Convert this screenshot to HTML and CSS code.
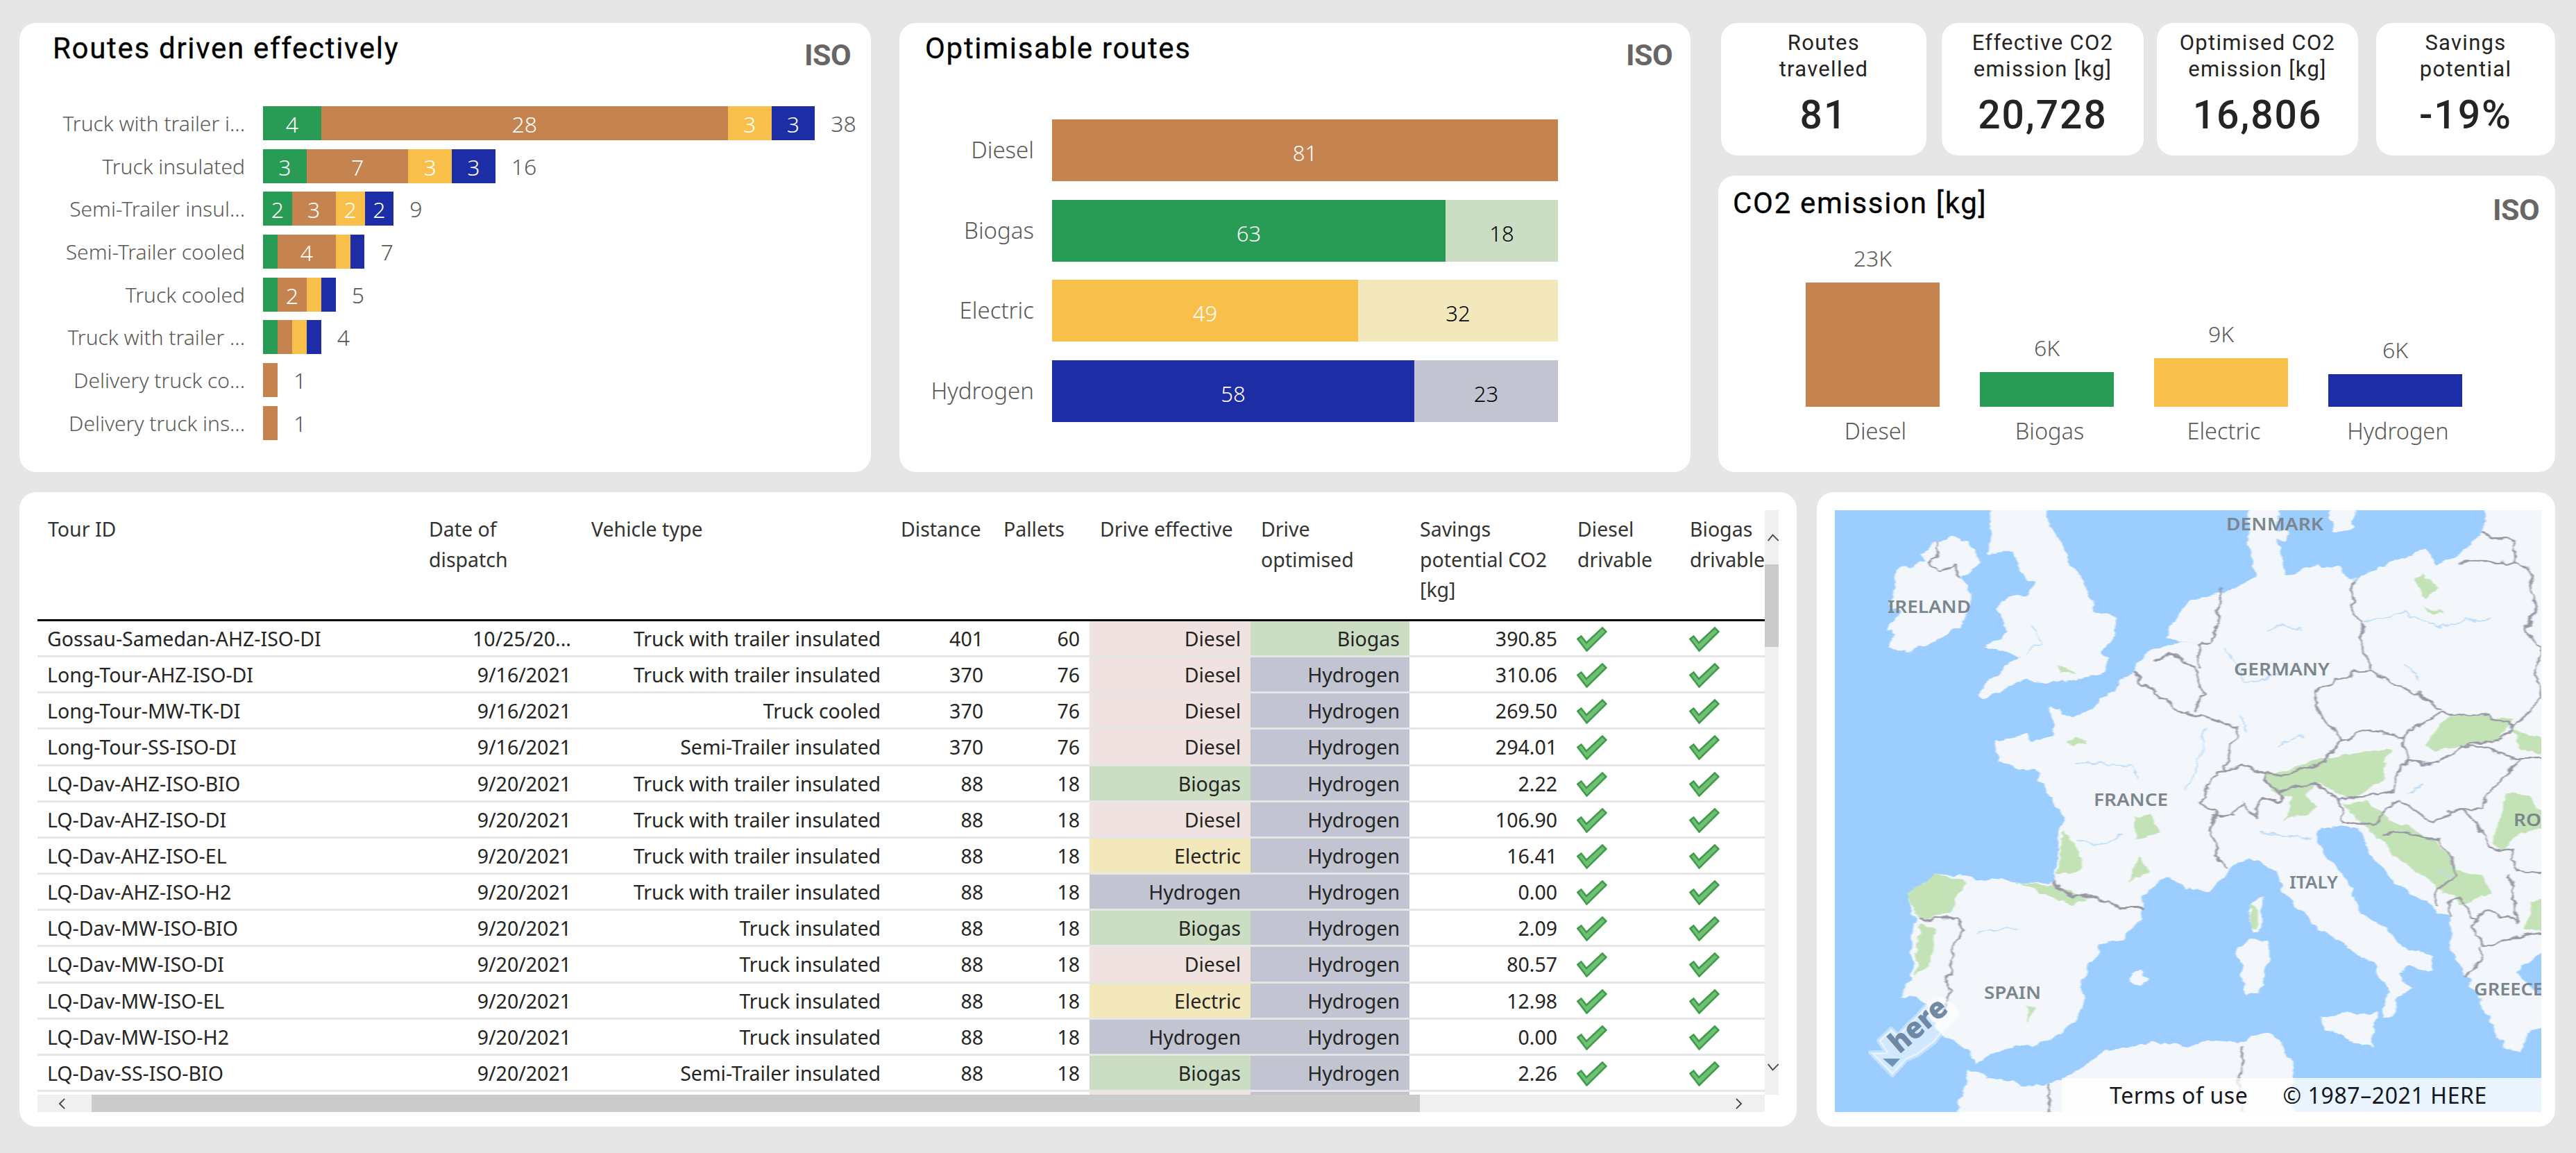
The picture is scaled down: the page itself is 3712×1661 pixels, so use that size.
FILE: index.html
```html
<!DOCTYPE html>
<html lang="en">
<head>
<meta charset="utf-8">
<title>Routes dashboard</title>
<link rel="stylesheet" href="styles.css">
</head>
<body>
<main class="page">
  <section class="top">
    <article class="card card-routes">
      <header class="head head-routes"><h2>Routes driven effectively</h2><span class="iso">ISO</span></header>
      <div class="stack">
        <div class="stack-row"><span class="cat">Truck with trailer i...</span><div class="bar"><i class="seg bio" style="--n:4">4</i><i class="seg die" style="--n:28">28</i><i class="seg ele" style="--n:3">3</i><i class="seg hyd" style="--n:3">3</i><b class="total">38</b></div></div>
        <div class="stack-row"><span class="cat">Truck insulated</span><div class="bar"><i class="seg bio" style="--n:3">3</i><i class="seg die" style="--n:7">7</i><i class="seg ele" style="--n:3">3</i><i class="seg hyd" style="--n:3">3</i><b class="total">16</b></div></div>
        <div class="stack-row"><span class="cat">Semi-Trailer insul...</span><div class="bar"><i class="seg bio" style="--n:2">2</i><i class="seg die" style="--n:3">3</i><i class="seg ele" style="--n:2">2</i><i class="seg hyd" style="--n:2">2</i><b class="total">9</b></div></div>
        <div class="stack-row"><span class="cat">Semi-Trailer cooled</span><div class="bar"><i class="seg bio" style="--n:1"></i><i class="seg die" style="--n:4">4</i><i class="seg ele" style="--n:1"></i><i class="seg hyd" style="--n:1"></i><b class="total">7</b></div></div>
        <div class="stack-row"><span class="cat">Truck cooled</span><div class="bar"><i class="seg bio" style="--n:1"></i><i class="seg die" style="--n:2">2</i><i class="seg ele" style="--n:1"></i><i class="seg hyd" style="--n:1"></i><b class="total">5</b></div></div>
        <div class="stack-row"><span class="cat">Truck with trailer ...</span><div class="bar"><i class="seg bio" style="--n:1"></i><i class="seg die" style="--n:1"></i><i class="seg ele" style="--n:1"></i><i class="seg hyd" style="--n:1"></i><b class="total">4</b></div></div>
        <div class="stack-row"><span class="cat">Delivery truck co...</span><div class="bar"><i class="seg die" style="--n:1"></i><b class="total">1</b></div></div>
        <div class="stack-row"><span class="cat">Delivery truck ins...</span><div class="bar"><i class="seg die" style="--n:1"></i><b class="total">1</b></div></div>
      </div>
    </article>

    <article class="card card-opt">
      <header class="head head-opt"><h2>Optimisable routes</h2><span class="iso">ISO</span></header>
      <div class="opt">
        <div class="opt-row"><span class="opt-cat">Diesel</span><div class="opt-bar"><i class="die" style="flex:81">81</i></div></div>
        <div class="opt-row"><span class="opt-cat">Biogas</span><div class="opt-bar"><i class="bio" style="flex:63">63</i><i class="bio-l" style="flex:18">18</i></div></div>
        <div class="opt-row"><span class="opt-cat">Electric</span><div class="opt-bar"><i class="ele" style="flex:49">49</i><i class="ele-l" style="flex:32">32</i></div></div>
        <div class="opt-row"><span class="opt-cat">Hydrogen</span><div class="opt-bar"><i class="hyd" style="flex:58">58</i><i class="hyd-l" style="flex:23">23</i></div></div>
      </div>
    </article>

    <div class="side">
      <div class="kpis">
        <div class="kpi kpi-a"><p>Routes<br>travelled</p><strong>81</strong></div>
        <div class="kpi kpi-b"><p>Effective CO2<br>emission [kg]</p><strong>20,728</strong></div>
        <div class="kpi kpi-c"><p>Optimised CO2<br>emission [kg]</p><strong>16,806</strong></div>
        <div class="kpi kpi-d"><p>Savings<br>potential</p><strong>-19%</strong></div>
      </div>
      <article class="card card-co2">
        <header class="head head-co2"><h2>CO2 emission [kg]</h2><span class="iso">ISO</span></header>
        <div class="cols">
          <div class="col"><span class="col-val">23K</span><i class="col-bar die" style="height:179px"></i><span class="col-cat">Diesel</span></div>
          <div class="col"><span class="col-val">6K</span><i class="col-bar bio" style="height:50px"></i><span class="col-cat">Biogas</span></div>
          <div class="col"><span class="col-val">9K</span><i class="col-bar ele" style="height:70px"></i><span class="col-cat">Electric</span></div>
          <div class="col"><span class="col-val">6K</span><i class="col-bar hyd" style="height:47px"></i><span class="col-cat">Hydrogen</span></div>
        </div>
      </article>
    </div>
  </section>

  <section class="bottom">
    <article class="card card-table">
      <svg class="defs" width="0" height="0" aria-hidden="true"><defs>
        <symbol id="tick" viewBox="0 0 44 36"><path d="M1.5 17.5 6.5 13.5 14 23 37 1.5 42.5 7 14.5 34.5Z" fill="#6fbf75" stroke="#3f9c4a" stroke-width="2.6" stroke-linejoin="miter"/></symbol>
      </defs></svg>
      <div class="scroller">
        <div class="grid">
          <div class="tr th">
            <div>Tour ID</div><div>Date of<br>dispatch</div><div>Vehicle type</div><div>Distance</div><div>Pallets</div><div>Drive effective</div><div>Drive<br>optimised</div><div>Savings<br>potential CO2<br>[kg]</div><div>Diesel<br>drivable</div><div>Biogas<br>drivable</div>
          </div>
          <div class="tr"><div>Gossau-Samedan-AHZ-ISO-DI</div><div class="r">10/25/20...</div><div class="r">Truck with trailer insulated</div><div class="r">401</div><div class="r">60</div><div class="r pk">Diesel</div><div class="r gr">Biogas</div><div class="r">390.85</div><div class="c"><svg class="tick"><use href="#tick"/></svg></div><div class="c"><svg class="tick"><use href="#tick"/></svg></div></div>
          <div class="tr"><div>Long-Tour-AHZ-ISO-DI</div><div class="r">9/16/2021</div><div class="r">Truck with trailer insulated</div><div class="r">370</div><div class="r">76</div><div class="r pk">Diesel</div><div class="r bl">Hydrogen</div><div class="r">310.06</div><div class="c"><svg class="tick"><use href="#tick"/></svg></div><div class="c"><svg class="tick"><use href="#tick"/></svg></div></div>
          <div class="tr"><div>Long-Tour-MW-TK-DI</div><div class="r">9/16/2021</div><div class="r">Truck cooled</div><div class="r">370</div><div class="r">76</div><div class="r pk">Diesel</div><div class="r bl">Hydrogen</div><div class="r">269.50</div><div class="c"><svg class="tick"><use href="#tick"/></svg></div><div class="c"><svg class="tick"><use href="#tick"/></svg></div></div>
          <div class="tr"><div>Long-Tour-SS-ISO-DI</div><div class="r">9/16/2021</div><div class="r">Semi-Trailer insulated</div><div class="r">370</div><div class="r">76</div><div class="r pk">Diesel</div><div class="r bl">Hydrogen</div><div class="r">294.01</div><div class="c"><svg class="tick"><use href="#tick"/></svg></div><div class="c"><svg class="tick"><use href="#tick"/></svg></div></div>
          <div class="tr"><div>LQ-Dav-AHZ-ISO-BIO</div><div class="r">9/20/2021</div><div class="r">Truck with trailer insulated</div><div class="r">88</div><div class="r">18</div><div class="r gr">Biogas</div><div class="r bl">Hydrogen</div><div class="r">2.22</div><div class="c"><svg class="tick"><use href="#tick"/></svg></div><div class="c"><svg class="tick"><use href="#tick"/></svg></div></div>
          <div class="tr"><div>LQ-Dav-AHZ-ISO-DI</div><div class="r">9/20/2021</div><div class="r">Truck with trailer insulated</div><div class="r">88</div><div class="r">18</div><div class="r pk">Diesel</div><div class="r bl">Hydrogen</div><div class="r">106.90</div><div class="c"><svg class="tick"><use href="#tick"/></svg></div><div class="c"><svg class="tick"><use href="#tick"/></svg></div></div>
          <div class="tr"><div>LQ-Dav-AHZ-ISO-EL</div><div class="r">9/20/2021</div><div class="r">Truck with trailer insulated</div><div class="r">88</div><div class="r">18</div><div class="r ye">Electric</div><div class="r bl">Hydrogen</div><div class="r">16.41</div><div class="c"><svg class="tick"><use href="#tick"/></svg></div><div class="c"><svg class="tick"><use href="#tick"/></svg></div></div>
          <div class="tr"><div>LQ-Dav-AHZ-ISO-H2</div><div class="r">9/20/2021</div><div class="r">Truck with trailer insulated</div><div class="r">88</div><div class="r">18</div><div class="r bl">Hydrogen</div><div class="r bl">Hydrogen</div><div class="r">0.00</div><div class="c"><svg class="tick"><use href="#tick"/></svg></div><div class="c"><svg class="tick"><use href="#tick"/></svg></div></div>
          <div class="tr"><div>LQ-Dav-MW-ISO-BIO</div><div class="r">9/20/2021</div><div class="r">Truck insulated</div><div class="r">88</div><div class="r">18</div><div class="r gr">Biogas</div><div class="r bl">Hydrogen</div><div class="r">2.09</div><div class="c"><svg class="tick"><use href="#tick"/></svg></div><div class="c"><svg class="tick"><use href="#tick"/></svg></div></div>
          <div class="tr"><div>LQ-Dav-MW-ISO-DI</div><div class="r">9/20/2021</div><div class="r">Truck insulated</div><div class="r">88</div><div class="r">18</div><div class="r pk">Diesel</div><div class="r bl">Hydrogen</div><div class="r">80.57</div><div class="c"><svg class="tick"><use href="#tick"/></svg></div><div class="c"><svg class="tick"><use href="#tick"/></svg></div></div>
          <div class="tr"><div>LQ-Dav-MW-ISO-EL</div><div class="r">9/20/2021</div><div class="r">Truck insulated</div><div class="r">88</div><div class="r">18</div><div class="r ye">Electric</div><div class="r bl">Hydrogen</div><div class="r">12.98</div><div class="c"><svg class="tick"><use href="#tick"/></svg></div><div class="c"><svg class="tick"><use href="#tick"/></svg></div></div>
          <div class="tr"><div>LQ-Dav-MW-ISO-H2</div><div class="r">9/20/2021</div><div class="r">Truck insulated</div><div class="r">88</div><div class="r">18</div><div class="r bl">Hydrogen</div><div class="r bl">Hydrogen</div><div class="r">0.00</div><div class="c"><svg class="tick"><use href="#tick"/></svg></div><div class="c"><svg class="tick"><use href="#tick"/></svg></div></div>
          <div class="tr"><div>LQ-Dav-SS-ISO-BIO</div><div class="r">9/20/2021</div><div class="r">Semi-Trailer insulated</div><div class="r">88</div><div class="r">18</div><div class="r gr">Biogas</div><div class="r bl">Hydrogen</div><div class="r">2.26</div><div class="c"><svg class="tick"><use href="#tick"/></svg></div><div class="c"><svg class="tick"><use href="#tick"/></svg></div></div>
          <div class="tr tr-cut"><div></div><div></div><div></div><div></div><div></div><div class="pk"></div><div class="bl"></div><div></div><div></div><div></div></div>
        </div>
      </div>
      <div class="vbar">
        <svg class="arrow-up" viewBox="0 0 20 16"><path d="M2 14 10 4 20 14" fill="none" stroke="#444" stroke-width="2"/></svg>
        <i class="vthumb"></i>
        <svg class="arrow-down" viewBox="0 0 20 16"><path d="M2 2 10 12 20 2" fill="none" stroke="#444" stroke-width="2"/></svg>
      </div>
      <div class="hbar">
        <svg class="arrow-left" viewBox="0 0 12 20"><path d="M10 2 2 10 10 18" fill="none" stroke="#444" stroke-width="2"/></svg>
        <i class="hthumb"></i>
        <svg class="arrow-right" viewBox="0 0 12 20"><path d="M2 2 10 10 2 18" fill="none" stroke="#444" stroke-width="2"/></svg>
      </div>
    </article>

    <article class="card card-map">
      <div class="map">
        <svg class="map-svg" viewBox="0 0 1018 867" preserveAspectRatio="none">
          <defs>
            <filter id="rough" filterUnits="userSpaceOnUse" x="0" y="0" width="1700" height="1700" color-interpolation-filters="sRGB">
              <feTurbulence type="fractalNoise" baseFrequency=".035" numOctaves="3" seed="7" result="n"/>
              <feDisplacementMap in="SourceGraphic" in2="n" scale="22" xChannelSelector="R" yChannelSelector="G"/>
              <feGaussianBlur stdDeviation="1.1"/>
            </filter>
          </defs>
          <g class="soft" transform="scale(.7347 .6113) translate(-114 -57)">
            <g class="land">
              <path d="M232 195 268 190 295 178 282 158 310 130 340 118 375 130 395 170 385 195 365 212 378 260 375 300 360 330 330 345 290 380 245 395 215 375 235 345 215 340 240 300 222 280 232 240Z"/>
              <path d="M420 30 520 30 545 110 570 170 595 205 610 245 620 295 665 305 665 345 640 390 655 410 640 440 590 455 530 465 480 455 440 480 410 505 392 495 430 440 480 400 440 390 408 380 450 340 448 310 432 295 440 265 490 260 505 230 470 190 465 150 412 160 420 100Z"/>
              <path d="M428 600 490 585 500 600 545 590 535 525 555 522 560 545 610 530 650 495 695 430 740 385 790 365 830 370 760 360 790 300 810 270 860 255 900 240 925 225 940 215 925 150 925 30 985 30 980 100 985 160 1000 210 1060 185 1100 190 1135 225 1150 210 1270 150 1300 185 1345 155 1385 115 1390 30 1530 30 1530 1090 1470 1120 1450 1150 1530 1230 1530 1260 1470 1290 1460 1340 1420 1310 1400 1260 1370 1190 1350 1150 1325 1100 1320 1020 1270 980 1210 930 1165 870 1140 810 1110 800 1060 810 1060 850 1100 900 1130 960 1145 1010 1200 1040 1215 1080 1285 1110 1285 1145 1240 1130 1220 1150 1240 1185 1215 1210 1205 1250 1185 1255 1200 1190 1175 1130 1100 1070 1050 1030 1000 960 975 900 930 872 890 905 850 955 800 945 770 920 715 965 720 1020 680 1060 630 1080 625 1110 595 1165 608 1215 570 1275 530 1310 430 1330 395 1362 365 1320 320 1290 290 1215 250 1200 265 1130 270 1030 258 960 315 912 370 920 470 935 540 935 555 860 558 780 520 700 510 670 435 650Z"/>
              <path d="M1085 30 1140 30 1130 100 1090 105Z"/>
              <path d="M965 105 1005 105 1002 130 975 130Z"/>
              <path d="M950 965 955 1040 935 1055 922 1000Z"/>
              <path d="M925 1070 960 1070 968 1120 945 1195 920 1200 905 1090Z"/>
              <path d="M1065 1250 1180 1240 1165 1325 1075 1280Z"/>
              <path d="M690 1160 715 1140 730 1160 712 1180Z"/>
              <path d="M350 1500 380 1370 405 1390 480 1410 530 1412 600 1370 640 1335 740 1310 800 1320 860 1305 910 1310 960 1290 985 1300 1015 1390 1015 1500Z"/>
            </g>
            <g class="green">
              <path d="M258 960 315 912 370 935 340 1010 275 1020Z"/>
              <path d="M285 1030 315 1040 295 1130 270 1155Z"/>
              <path d="M565 810 600 880 590 910 550 915Z"/>
              <path d="M475 935 540 940 610 975 580 985 530 965Z"/>
              <path d="M960 680 1000 670 1070 640 1205 620 1190 690 1130 740 1060 700 1040 730 1060 760 1000 790 1010 735 970 720Z"/>
              <path d="M1270 610 1320 540 1370 540 1440 550 1420 600 1340 610 1290 625Z"/>
              <path d="M1440 570 1530 610 1530 640 1460 620Z"/>
              <path d="M1110 750 1160 740 1210 790 1290 830 1330 900 1380 920 1400 960 1340 985 1310 950 1240 900 1170 820Z"/>
              <path d="M1430 720 1480 740 1530 800 1460 810 1425 860 1405 830 1420 780Z"/>
              <path d="M1470 1045 1480 980 1530 960 1530 1045Z"/>
              <path d="M1265 205 1295 235 1275 265 1250 225Z"/>
              <path d="M1265 280 1310 300 1290 303Z"/>
              <path d="M570 600 610 595 610 608 580 610Z"/>
              <path d="M700 780 735 775 750 820 705 835Z"/>
              <path d="M710 870 730 905 690 935Z"/>
              <path d="M925 985 945 1000 945 1040 930 1040Z"/>
              <path d="M490 1225 510 1230 495 1265Z"/>
              <path d="M555 425 590 440 560 445Z"/>
            </g>
            <g class="rivers">
              <path d="M1150 320 1230 300 1300 330 1400 310"/>
              <path d="M1230 420 1260 460"/>
              <path d="M880 380 920 470 990 440"/>
              <path d="M1030 340 1000 330 960 340"/>
              <path d="M590 650 690 660 710 690"/>
              <path d="M680 820 640 845 590 840"/>
              <path d="M985 610 1030 590"/>
              <path d="M910 540 920 580"/>
              <path d="M840 570 830 640 800 720"/>
              <path d="M1240 720 1270 705"/>
              <path d="M950 820 1050 830"/>
              <path d="M390 1050 470 1040"/>
              <path d="M500 330 520 370 490 400"/>
              <path d="M1300 910 1320 920"/>
            </g>
            <g class="borders">
              <path d="M310 130 320 160 300 180 325 205 345 185 362 212"/>
              <path d="M695 430 720 470 760 500 790 530 840 545 905 570 885 640 880 670"/>
              <path d="M735 410 775 395 820 430 835 490 820 530"/>
              <path d="M870 240 865 320 850 370 825 375 830 430"/>
              <path d="M880 670 860 680 830 750 860 760 860 780 895 775 915 745 940 780 950 740 990 740 990 720 960 700 960 680 920 655 880 670"/>
              <path d="M860 775 850 820 865 850 860 875 885 905"/>
              <path d="M960 680 1000 680 1080 650 1085 630 1110 600 1060 530 1055 485 1130 440 1165 435 1150 380 1145 320 1130 290 1135 225"/>
              <path d="M1165 435 1220 470 1260 490 1305 530"/>
              <path d="M1110 600 1160 575 1230 595 1240 575 1305 535 1395 540 1445 570 1420 600 1345 610 1300 655 1240 650 1230 595"/>
              <path d="M1445 570 1500 500 1490 440 1500 380 1470 340 1490 290 1475 195 1450 180 1340 180"/>
              <path d="M1385 115 1445 130 1450 180"/>
              <path d="M990 720 1050 700 1100 740 1210 720 1220 660 1240 650"/>
              <path d="M1100 740 1115 790 1170 800 1190 765 1215 740 1290 790 1340 760 1370 790 1400 850 1440 860 1455 905 1530 915"/>
              <path d="M1345 610 1460 640 1400 720 1380 760 1340 760"/>
              <path d="M1190 820 1230 815 1300 835 1320 880 1330 920 1300 945 1290 985"/>
              <path d="M1320 980 1340 970 1370 1020 1370 1060 1390 1085 1440 1065 1530 1045"/>
              <path d="M1380 1085 1385 1115 1350 1155"/>
              <path d="M1320 980 1320 1020"/>
              <path d="M1440 910 1440 960 1455 1030 1400 1000 1370 1020"/>
              <path d="M1530 640 1460 640"/>
              <path d="M540 935 570 965 630 970 680 995 720 995"/>
              <path d="M275 1020 355 1020 370 1045 345 1080 345 1150 325 1160 340 1190 330 1240"/>
              <path d="M915 1320 908 1400 915 1500"/>
              <path d="M530 1412 540 1500"/>
            </g>
          </g>
          <text class="lbl" x="564" y="29" textLength="140" lengthAdjust="spacingAndGlyphs">DENMARK</text>
          <text class="lbl" x="76" y="148" textLength="120" lengthAdjust="spacingAndGlyphs">IRELAND</text>
          <text class="lbl" x="575" y="238" textLength="138" lengthAdjust="spacingAndGlyphs">GERMANY</text>
          <text class="lbl" x="373" y="426" textLength="107" lengthAdjust="spacingAndGlyphs">FRANCE</text>
          <text class="lbl" x="655" y="545" textLength="70" lengthAdjust="spacingAndGlyphs">ITALY</text>
          <text class="lbl" x="215" y="704" textLength="82" lengthAdjust="spacingAndGlyphs">SPAIN</text>
          <text class="lbl" x="921" y="699" textLength="100" lengthAdjust="spacingAndGlyphs">GREECE</text>
          <text class="lbl" x="978" y="455" textLength="40" lengthAdjust="spacingAndGlyphs">RO</text>
          <path class="logo-halo" d="M63 764 81 747 91 756 106 740 119 728 136 708 153 703 173 715 178 727 163 742 143 767 119 785 103 792 83 814 51 781 74 781Z"/>
          <text class="logo-text" transform="translate(93 784) rotate(-41)" textLength="96" lengthAdjust="spacingAndGlyphs">here</text>
          <path class="logo-mark" d="M69 790 94 790 83 802Z"/>
        </svg>
        <div class="attrib"><span>Terms of use</span><span>© 1987–2021 HERE</span></div>
      </div>
    </article>
  </section>
</main>
</body>
</html>
```

FILE: styles.css
```css
* { box-sizing: border-box; }
html, body { margin: 0; height: 100%; }
body {
  background: #e6e6e6;
  font-family: "Noto Sans", "Liberation Sans", sans-serif;
  color: #252423;
  overflow: hidden;
}
h2, p { margin: 0; font: inherit; }
i, b { font-style: normal; font-weight: inherit; }

.page {
  width: 3712px;
  height: 1661px;
  padding: 33px 30px 38px 28px;
  display: flex;
  flex-direction: column;
  gap: 29px;
}
.top { display: flex; height: 647px; }
.bottom { display: flex; height: 914px; gap: 29px; }

.card { background: #fff; border-radius: 24px; position: relative; }
.card-routes { width: 1227px; margin-right: 41px; }
.card-opt { width: 1140px; margin-right: 40px; }
.side { width: 1206px; display: flex; flex-direction: column; gap: 29px; }

.head { display: flex; justify-content: space-between; font-family: Roboto, "Liberation Sans", sans-serif; }
.head h2 { font-size: 42px; line-height: 48px; font-weight: 400; color: #000; letter-spacing: 1.7px; -webkit-text-stroke: .3px #000; }
.iso { font-size: 43px; line-height: 44px; font-weight: 700; color: #666; margin-top: 11px; letter-spacing: -.6px; }
.head-routes { height: 120px; padding: 13px 29px 0 48px; }
.head-opt { height: 139px; padding: 13px 26px 0 37px; }
.head-co2 { height: 120px; padding: 16px 23px 0 21px; }

.die { background: #c4834f; }
.bio { background: #289b55; }
.ele { background: #f9bf4b; }
.hyd { background: #1c2da5; }
.bio-l { background: #cbdec3; color: #111; }
.ele-l { background: #f3e8bc; color: #111; }
.hyd-l { background: #c2c4d2; color: #111; }

.stack { display: flex; flex-direction: column; gap: 12.7px; }
.stack-row { display: grid; grid-template-columns: 325px 1fr; column-gap: 26px; height: 49px; align-items: center; }
.cat { text-align: right; font-size: 30px; font-weight: 300; color: #5a5856; white-space: nowrap; }
.bar { display: flex; align-items: center; height: 49px; }
.seg { width: calc(var(--n) * 20.93px); height: 49px; color: #fff; font-size: 32px; font-weight: 300; line-height: 51px; text-align: center; }
.total { margin-left: 23px; font-size: 32px; font-weight: 300; color: #5a5856; }

.opt { display: flex; flex-direction: column; gap: 26.5px; }
.opt-row { display: grid; grid-template-columns: 194px 729px; column-gap: 26px; height: 89px; align-items: center; }
.opt-cat { text-align: right; font-size: 33px; font-weight: 300; color: #5a5856; margin-top: -2px; }
.opt-bar { display: flex; height: 89px; }
.opt-bar i { color: #fff; font-size: 31px; font-weight: 300; line-height: 96px; text-align: center; }
.opt-bar .bio-l, .opt-bar .ele-l, .opt-bar .hyd-l { color: #000; }

.kpis { display: flex; height: 191px; padding-left: 4px; }
.kpi { background: #fff; border-radius: 24px; text-align: center; font-family: Roboto, "Liberation Sans", sans-serif; padding-top: 10px; }
.kpi p { font-size: 31px; line-height: 37.5px; color: #252423; letter-spacing: 1.3px; }
.kpi strong { display: block; margin-top: 15px; font-size: 57px; line-height: 66px; font-weight: 500; color: #252423; letter-spacing: 2px; }
.kpi-a { width: 296px; margin-right: 22px; }
.kpi-b { width: 291px; margin-right: 19px; }
.kpi-c { width: 290px; margin-right: 26px; }
.kpi-d { width: 258px; }

.card-co2 { flex: 1; }
.cols { display: flex; gap: 58px; padding-left: 126px; align-items: flex-end; height: 270px; }
.col { width: 193px; display: flex; flex-direction: column; align-items: center; }
.col-val { font-size: 32px; font-weight: 300; line-height: 42px; color: #5a5856; margin-bottom: 14px; }
.col-bar { display: block; width: 193px; }
.col-cat { font-size: 32.5px; font-weight: 300; line-height: 44px; color: #5a5856; margin: 13px 0 0 8px; }

.card-table { width: 2561px; padding: 26px 26px 21px 26px; display: grid; grid-template-columns: 2489px 20px; grid-template-rows: 842px 25px; }
.scroller { overflow: hidden; }
.grid { width: 2600px; }
.tr { display: grid; grid-template-columns: 549px 234px 446px 148px 139px 232px 229px 227px 162px 234px; height: 52.17px; font-size: 28.5px; }
.tr > div { padding: 0 14px; border-bottom: 3px solid #e6e6e6; line-height: 51px; white-space: nowrap; overflow: hidden; }
.tr .r { text-align: right; }
.tr .c { padding: 8px 0 0 14px; line-height: 0; }
.th { height: 160px; }
.tr.th > div { border-bottom: 3px solid #000; line-height: 43.5px; padding: 6px 14px 0 15px; font-weight: 400; color: #333; overflow: visible; }
.pk { background: #efe2e0; }
.gr { background: #cbdec3; }
.bl { background: #c2c4d2; }
.ye { background: #f3e8bc; }
.tr-cut { height: 12px; }
.tick { width: 44px; height: 36px; display: block; }
.defs { position: absolute; }

.vbar { background: #f0f0f0; position: relative; }
.vthumb { position: absolute; left: 0; right: 0; top: 78px; height: 119px; background: #cbcbcb; }
.arrow-up, .arrow-down { position: absolute; left: 3px; width: 17px; height: 14px; }
.arrow-up { top: 32px; }
.arrow-down { bottom: 32px; }
.hbar { background: #f0f0f0; position: relative; grid-column: 1; }
.hthumb { position: absolute; left: 78px; width: 1914px; top: 0; bottom: 0; background: #cbcbcb; }
.arrow-left, .arrow-right { position: absolute; top: 4px; width: 11px; height: 18px; }
.arrow-left { left: 30px; }
.arrow-right { right: 32px; }

.card-map { width: 1064px; padding: 26px 20px 20px 26px; }
.map { width: 1018px; height: 867px; position: relative; background: #9bcdfe; overflow: hidden; }
.map-svg { width: 100%; height: 100%; display: block; }
.soft { filter: url(#rough); }
.land path { fill: #f3f7fb; }
.green path { fill: #c3e2b6; }
.rivers path { fill: none; stroke: #bcdcf8; stroke-width: 1.8; vector-effect: non-scaling-stroke; }
.borders path { fill: none; stroke: #9997a6; stroke-width: 3; stroke-linejoin: round; vector-effect: non-scaling-stroke; }
.lbl { font-family: "Noto Sans", sans-serif; font-size: 26px; font-weight: 600; fill: #7b868e; }
.logo-halo { fill: #fff; fill-opacity: .55; stroke: #fff; stroke-opacity: .4; stroke-width: 6; stroke-linejoin: round; }
.logo-text { font-family: "Noto Sans", sans-serif; font-size: 42px; font-weight: 900; fill: #64809c; fill-opacity: .92; }
.logo-mark { fill: #6c93b8; }
.attrib {
  position: absolute; right: 0; bottom: 0; width: 691px; height: 49px;
  background: rgba(255,255,255,.78);
  display: flex; align-items: center; gap: 50px; padding-left: 69px;
  font-size: 32px; letter-spacing: .6px; color: #14171f; white-space: nowrap;
}
```
